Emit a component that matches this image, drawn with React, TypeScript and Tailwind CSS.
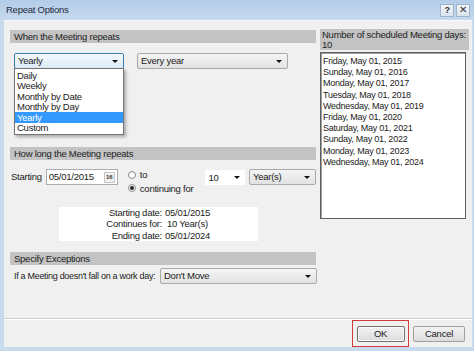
import * as React from "react";

const DATES = [
  "Friday, May 01, 2015",
  "Sunday, May 01, 2016",
  "Monday, May 01, 2017",
  "Tuesday, May 01, 2018",
  "Wednesday, May 01, 2019",
  "Friday, May 01, 2020",
  "Saturday, May 01, 2021",
  "Sunday, May 01, 2022",
  "Monday, May 01, 2023",
  "Wednesday, May 01, 2024",
];

const OPTIONS = ["Daily", "Weekly", "Monthly by Date", "Monthly by Day", "Yearly", "Custom"];

function Arrow() {
  return <span className="w-0 h-0 border-x-[3px] border-x-transparent border-t-[3px] border-t-[#111]" />;
}

function Select({ value, className }: { value: string; className?: string }) {
  return (
    <div
      className={
        "h-[16px] shrink-0 flex items-center justify-between pl-[3px] pr-[5px] rounded-[2px] border border-[#a9a9a9] bg-gradient-to-b from-[#f5f5f5] to-[#e2e2e2] " +
        (className ?? "")
      }
    >
      <span>{value}</span>
      <Arrow />
    </div>
  );
}

function SectionHeader({ title, className }: { title: string; className?: string }) {
  return (
    <div className={"h-[13px] shrink-0 flex items-center pl-[4px] bg-[#c3c3c3] text-[#222] " + (className ?? "")}>
      {title}
    </div>
  );
}

function Radio({ checked }: { checked?: boolean }) {
  return (
    <span className="w-[8px] h-[8px] rounded-full border border-[#8a8a8a] bg-white flex items-center justify-center">
      {checked && <span className="w-[4px] h-[4px] rounded-full bg-[#222]" />}
    </span>
  );
}

export default function App() {
  return (
    <div
      className="w-[474px] h-[351px] flex flex-col bg-[#c8daee] overflow-hidden text-[9.5px] tracking-[-0.25px] text-[#1b1b1b] leading-none whitespace-nowrap"
      style={{ fontFamily: '"Liberation Sans", Arial, sans-serif' }}
    >
      {/* title bar */}
      <div className="h-[20px] shrink-0 flex items-center justify-between pl-[6px] pr-[4px] bg-gradient-to-b from-[#b3cde9] to-[#c6d9ee]">
        <span className="text-[9.5px] text-[#1e2a3a]">Repeat Options</span>
        <div className="flex gap-[2px]">
          <span className="w-[14px] h-[13px] flex items-center justify-center border border-[#9fb3c9] bg-gradient-to-b from-[#f3f6fa] to-[#d9e3ee] text-[9px] font-bold text-[#333]">
            ?
          </span>
          <span className="w-[14px] h-[13px] flex items-center justify-center border border-[#9fb3c9] bg-gradient-to-b from-[#f3f6fa] to-[#d9e3ee] text-[10px] text-[#333]">
            ✕
          </span>
        </div>
      </div>

      {/* body */}
      <div className="flex-1 min-h-0 ml-[4px] mr-[2px] mb-[4px] bg-[#f0f0f0] border-t border-t-[#fafafa] flex flex-col">
        <div className="flex shrink-0">
          {/* left column */}
          <div className="w-[306px] ml-[6px] flex flex-col">
            <SectionHeader title="When the Meeting repeats" className="mt-[9px]" />

            <div className="mt-[10px] flex">
              <div className="relative ml-[4px] w-[110px]">
                <div className="h-[16px] flex items-center justify-between pl-[3px] pr-[5px] rounded-[2px] border border-[#3c7fb1] bg-gradient-to-b from-[#f3f9fd] to-[#dcebf6]">
                  <span>Yearly</span>
                  <Arrow />
                </div>
                <div className="absolute left-0 top-[15px] w-[110px] bg-white border border-[#767676] shadow-[2px_2px_3px_rgba(0,0,0,0.3)] py-[1px] z-10">
                  {OPTIONS.map((o) => (
                    <div
                      key={o}
                      className={
                        "h-[10.5px] flex items-center pl-[2px] " + (o === "Yearly" ? "bg-[#3399ff] text-white" : "")
                      }
                    >
                      {o}
                    </div>
                  ))}
                </div>
              </div>
              <Select value="Every year" className="ml-[13px] w-[151px]" />
            </div>

            <SectionHeader title="How long the Meeting repeats" className="mt-[78px]" />

            <div className="mt-[9px] h-[24px] flex items-start">
              <span className="ml-[1px] mt-[3px]">Starting</span>
              <div className="ml-[4px] w-[75px] h-[16px] flex items-center justify-between pl-[2px] pr-[2px] bg-white border border-[#abadb3]">
                <span>05/01/2015</span>
                <span className="w-[11px] h-[11px] flex items-center justify-center text-[6px] font-bold tracking-normal text-[#333] bg-[#f0f0f0] border border-[#c8c8c8]">
                  16
                </span>
              </div>
              <div className="ml-[10px] mt-[1px] flex flex-col gap-[4px]">
                <div className="flex items-center gap-[4px]">
                  <Radio />
                  <span>to</span>
                </div>
                <div className="flex items-center gap-[4px]">
                  <Radio checked />
                  <span>continuing for</span>
                </div>
              </div>
              <div className="ml-[12px] mt-[1px] w-[41px] h-[15px] flex items-center justify-between pl-[3px] pr-[5px] bg-white">
                <span>10</span>
                <Arrow />
              </div>
              <Select value="Year(s)" className="ml-[4px] w-[67px]" />
            </div>

            <div className="mt-[14px] ml-[49px] w-[199px] h-[34px] bg-white flex flex-col justify-center gap-[2px]">
              <div className="flex">
                <span className="w-[103px] text-right">Starting date:</span>
                <span className="ml-[3px]">05/01/2015</span>
              </div>
              <div className="flex">
                <span className="w-[103px] text-right">Continues for:</span>
                <span className="ml-[5px]">10 Year(s)</span>
              </div>
              <div className="flex">
                <span className="w-[103px] text-right">Ending date:</span>
                <span className="ml-[3px]">05/01/2024</span>
              </div>
            </div>

            <SectionHeader title="Specify Exceptions" className="mt-[11px]" />

            <div className="mt-[3px] flex items-center">
              <span className="ml-[4px] text-[9px] tracking-[-0.3px]">If a Meeting doesn't fall on a work day:</span>
              <Select value="Don't Move" className="ml-auto w-[157px] mr-[-1px]" />
            </div>
          </div>

          {/* right column */}
          <div className="ml-[4px] w-[149px] flex flex-col">
            <div className="mt-[8px] h-[21px] bg-[#c3c3c3] pl-[2px] pt-[1px] leading-[10px] text-[#222] whitespace-normal">
              Number of scheduled Meeting days:
              <br />
              10
            </div>
            <div className="mt-[2px] w-[146px] h-[167px] bg-white border border-[#5e5e5e] shadow-[inset_1px_1px_0_#a0a0a0] pl-[2px] pt-[3px] text-[9px] leading-[11.2px]">
              {DATES.map((d) => (
                <div key={d}>{d}</div>
              ))}
            </div>
          </div>
        </div>

        {/* separator */}
        <div className="mt-[34px] shrink-0 border-t border-t-[#cfcfcf] border-b border-b-white" />

        {/* footer */}
        <div className="flex shrink-0 justify-end items-center pr-[7px]">
          <div className="w-[57px] h-[27px] border-[1.5px] border-[#d23b3b] flex items-center justify-center">
            <button className="w-[48px] h-[16px] border border-[#707070] rounded-[2px] bg-gradient-to-b from-[#f2f2f2] to-[#dddddd] shadow-[inset_0_0_0_1px_#fafafa]">
              OK
            </button>
          </div>
          <button className="ml-[4px] w-[52px] h-[16px] border border-[#a0a0a0] rounded-[2px] bg-gradient-to-b from-[#f2f2f2] to-[#dddddd]">
            Cancel
          </button>
        </div>
      </div>
    </div>
  );
}
